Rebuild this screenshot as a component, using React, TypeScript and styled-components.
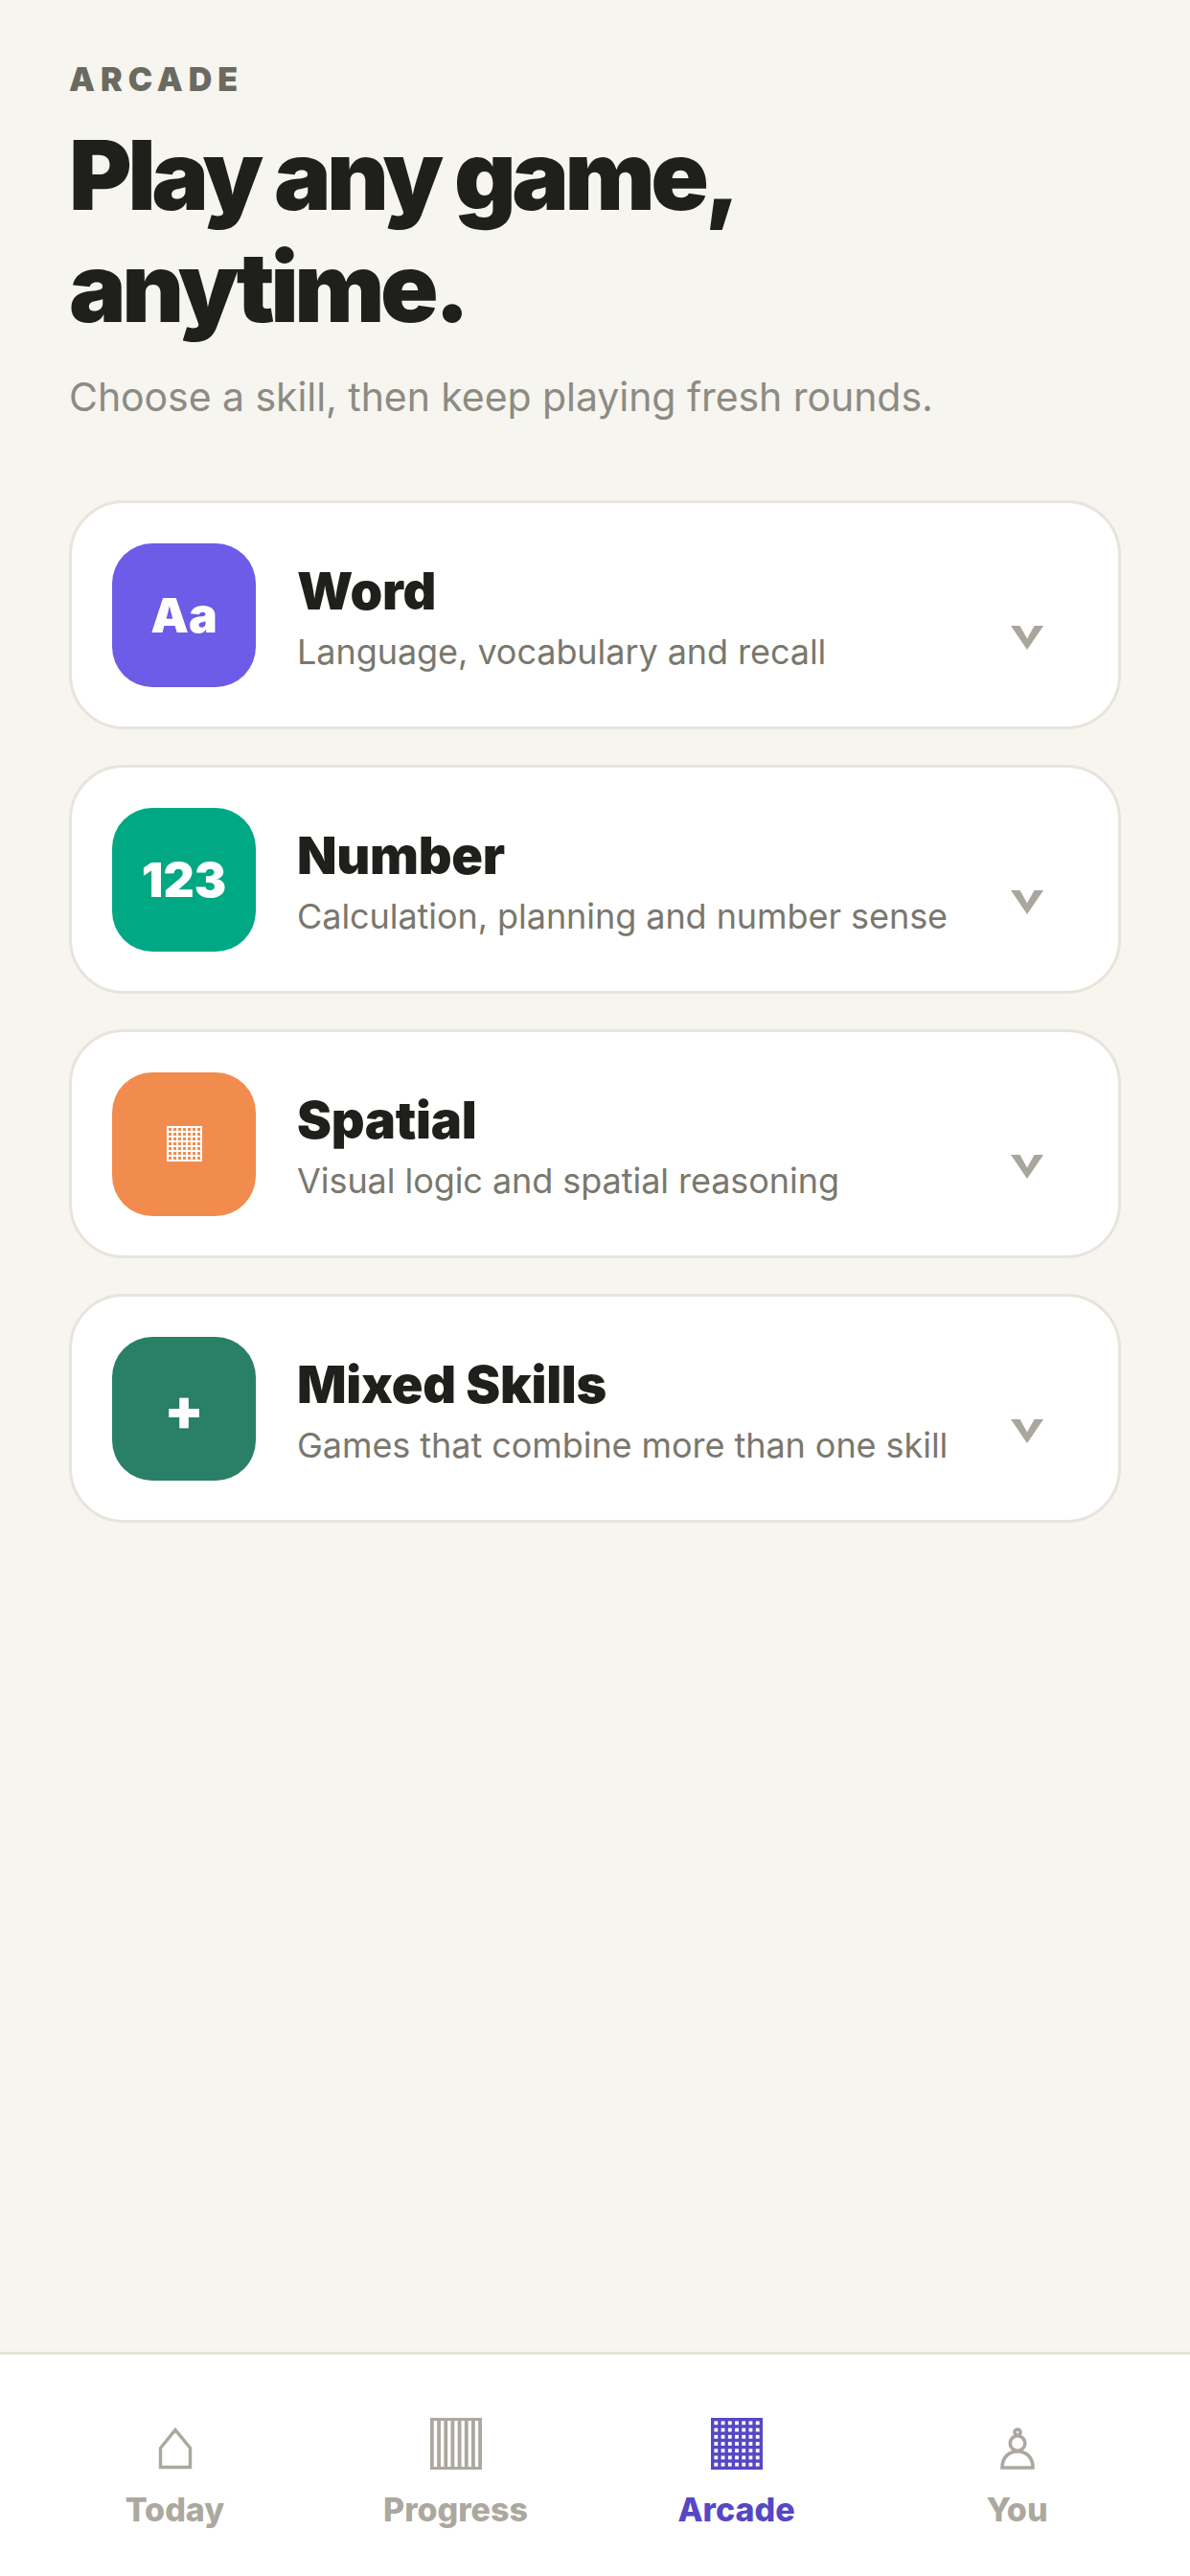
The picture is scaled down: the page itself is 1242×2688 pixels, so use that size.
import styled, { createGlobalStyle } from "styled-components";
import type { ReactNode } from "react";

const GlobalStyle = createGlobalStyle`
  * {
    box-sizing: border-box;
  }
  html,
  body {
    margin: 0;
    padding: 0;
    background: #f6f5f0;
    font-family: Inter, "Noto Sans", sans-serif;
  }
`;

const Page = styled.div`
  display: flex;
  flex-direction: column;
  width: 1242px;
  height: 2688px;
  overflow: hidden;
`;

const Main = styled.main`
  flex: 1;
  padding: 63px 72px 0;
`;

const Eyebrow = styled.div`
  font-size: 34px;
  line-height: 40px;
  font-weight: 900;
  letter-spacing: 0.175em;
  color: #6b6a60;
`;

const Title = styled.h1`
  margin: 21px 0 0;
  font-size: 100px;
  line-height: 117px;
  font-weight: 900;
  letter-spacing: -0.045em;
  color: #1f1f1b;
`;

const Subtitle = styled.p`
  margin: 30px 0 0;
  font-size: 41px;
  line-height: 52px;
  font-weight: 400;
  letter-spacing: -0.06px;
  color: #8d8b82;
`;

const CardList = styled.div`
  display: flex;
  flex-direction: column;
  gap: 37px;
  margin-top: 82px;
`;

const Card = styled.div`
  display: flex;
  align-items: center;
  height: 239px;
  padding: 0 78px 0 42px;
  background: #fff;
  border: 3px solid #e8e4da;
  border-radius: 57px;
`;

const IconTile = styled.div<{ $bg: string; $size?: number }>`
  flex: none;
  display: flex;
  align-items: center;
  justify-content: center;
  width: 150px;
  height: 150px;
  border-radius: 42px;
  background: ${(p) => p.$bg};
  color: #fff;
  font-size: ${(p) => p.$size ?? 50}px;
  font-weight: 900;
`;

const CardText = styled.div`
  flex: 1;
  min-width: 0;
  margin-left: 43px;
`;

const CardTitle = styled.div`
  margin-top: 5px;
  font-size: 54px;
  line-height: 64px;
  font-weight: 900;
  letter-spacing: -0.005em;
  color: #1f1f1b;
`;

const CardSub = styled.div`
  margin-top: 7px;
  font-size: 36px;
  line-height: 48px;
  letter-spacing: -0.06px;
  color: #7a776d;
`;

const Chevron = styled.svg`
  flex: none;
  width: 34px;
  height: 25px;
  margin-top: 48px;
  fill: #a9a69d;
`;

const Nav = styled.nav`
  flex: none;
  display: grid;
  grid-template-columns: repeat(4, 1fr);
  height: 234px;
  padding: 0 34px 0 36px;
  background: #fff;
  border-top: 3px solid #e8e4da;
`;

const NavItem = styled.div<{ $active?: boolean }>`
  display: flex;
  flex-direction: column;
  align-items: center;
  padding-top: 66px;
  color: ${(p) => (p.$active ? "#5647c5" : "#aca89f")};
`;

const NavIcon = styled.div`
  display: flex;
  align-items: flex-end;
  justify-content: center;
  height: 54px;
`;

const NavLabel = styled.div`
  margin-top: 22px;
  font-size: 34px;
  line-height: 40px;
  font-weight: 800;
`;

const range = (n: number) => Array.from({ length: n }, (_, i) => i);

// grid glyph: a square of thin lines, used by Spatial and the Arcade tab
const GridIcon = ({ size, stroke }: { size: number; stroke: number }) => {
  const step = (size - stroke) / 7;
  return (
    <svg width={size} height={size} viewBox={`0 0 ${size} ${size}`} fill="currentColor">
      {range(8).map((i) => (
        <g key={i}>
          <rect x={i * step} y={0} width={stroke} height={size} />
          <rect x={0} y={i * step} width={size} height={stroke} />
        </g>
      ))}
    </svg>
  );
};

const BarsIcon = () => (
  <svg width={54} height={54} viewBox="0 0 54 54" fill="currentColor">
    {range(8).map((i) => (
      <rect key={i} x={i * 7.17} y={0} width={3.8} height={54} />
    ))}
    <rect x={0} y={0} width={54} height={3} />
    <rect x={0} y={51} width={54} height={3} />
  </svg>
);

const HouseIcon = () => (
  <svg width={36} height={44} viewBox="0 0 36 44" fill="none" stroke="currentColor" strokeWidth={3.4}>
    <path d="M18 2.5 L33.5 21.5 V41.5 H2.5 V21.5 Z" />
  </svg>
);

const PawnIcon = () => (
  <svg width={36} height={44} viewBox="0 0 36 44" fill="none" stroke="currentColor" strokeWidth={3.6}>
    <circle cx={18} cy={5} r={3} />
    <circle cx={18} cy={16.5} r={7.8} />
    <path d="M2 42 C2 31 9 25 18 25 C27 25 34 31 34 42 Z" />
  </svg>
);

const skills: { name: string; sub: string; bg: string; icon: ReactNode; size?: number }[] = [
  { name: "Word", sub: "Language, vocabulary and recall", bg: "#6c5ce7", icon: "Aa" },
  { name: "Number", sub: "Calculation, planning and number sense", bg: "#00a884", icon: "123" },
  {
    name: "Spatial",
    sub: "Visual logic and spatial reasoning",
    bg: "#f28c4e",
    icon: <GridIcon size={37} stroke={2} />,
  },
  {
    name: "Mixed Skills",
    sub: "Games that combine more than one skill",
    bg: "#2a7f67",
    icon: "+",
    size: 60,
  },
];

const tabs: { label: string; icon: ReactNode; active?: boolean }[] = [
  { label: "Today", icon: <HouseIcon /> },
  { label: "Progress", icon: <BarsIcon /> },
  { label: "Arcade", icon: <GridIcon size={54} stroke={3.4} />, active: true },
  { label: "You", icon: <PawnIcon /> },
];

const App = () => {
  return (
    <Page>
      <GlobalStyle />
      <Main>
        <Eyebrow>ARCADE</Eyebrow>
        <Title>
          Play any game,
          <br />
          anytime.
        </Title>
        <Subtitle>Choose a skill, then keep playing fresh rounds.</Subtitle>
        <CardList>
          {skills.map((s) => (
            <Card key={s.name}>
              <IconTile $bg={s.bg} $size={s.size}>
                {s.icon}
              </IconTile>
              <CardText>
                <CardTitle>{s.name}</CardTitle>
                <CardSub>{s.sub}</CardSub>
              </CardText>
              <Chevron viewBox="0 0 34 25">
                <path d="M0 0 H9.5 L17 13.5 L24.5 0 H34 L17 25 Z" />
              </Chevron>
            </Card>
          ))}
        </CardList>
      </Main>
      <Nav>
        {tabs.map((t) => (
          <NavItem key={t.label} $active={t.active}>
            <NavIcon>{t.icon}</NavIcon>
            <NavLabel>{t.label}</NavLabel>
          </NavItem>
        ))}
      </Nav>
    </Page>
  );
};

export default App;
